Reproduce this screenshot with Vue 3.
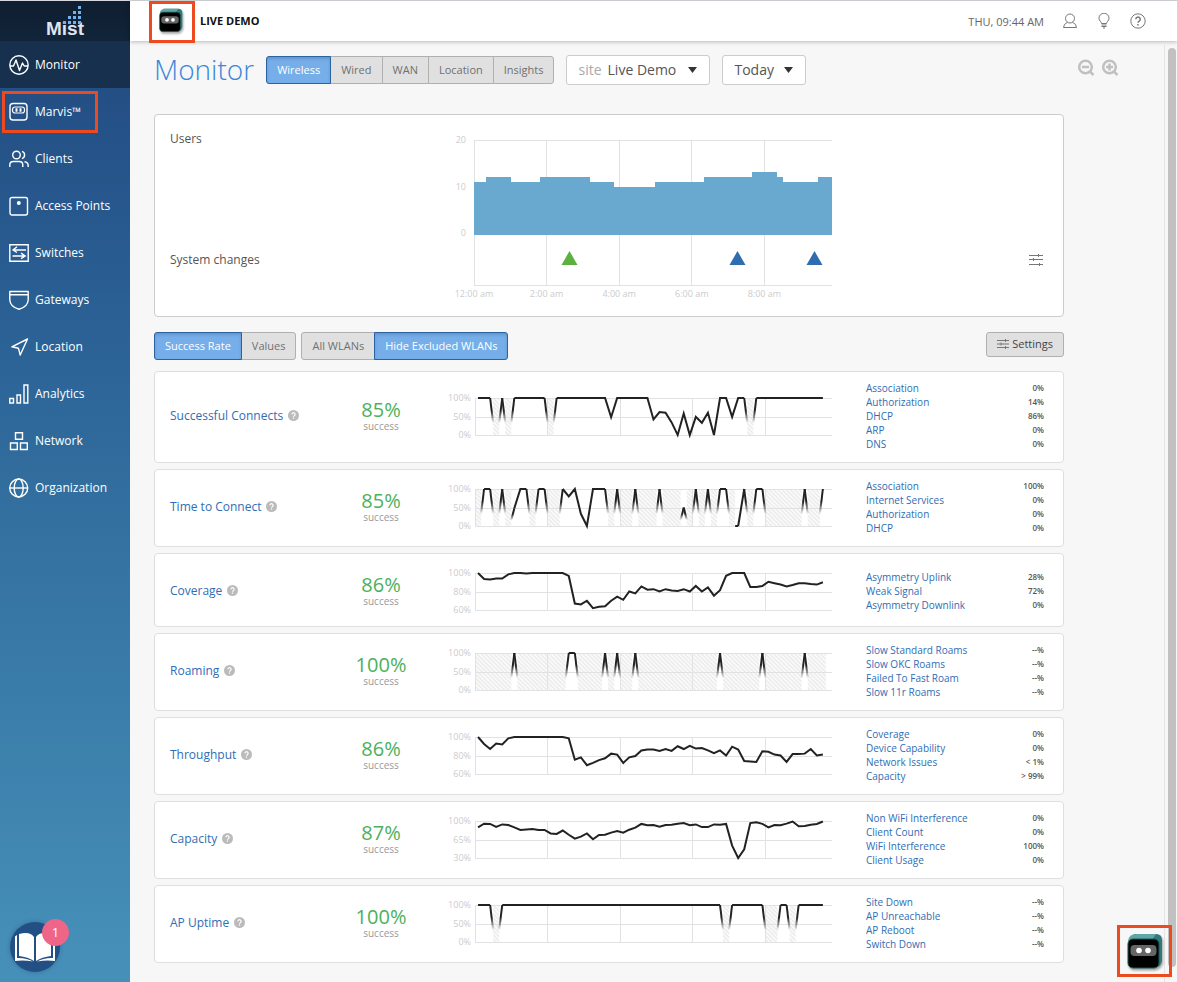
<script setup>
const nav = [
  { name: 'Monitor', icon: 'monitor', active: true },
  { name: 'Marvis™', icon: 'marvis' },
  { name: 'Clients', icon: 'clients' },
  { name: 'Access Points', icon: 'ap' },
  { name: 'Switches', icon: 'switches' },
  { name: 'Gateways', icon: 'gateways' },
  { name: 'Location', icon: 'location' },
  { name: 'Analytics', icon: 'analytics' },
  { name: 'Network', icon: 'network' },
  { name: 'Organization', icon: 'organization' },
]
const tabs = ['Wireless', 'Wired', 'WAN', 'Location', 'Insights']

// 58 samples, ten minutes apart; null marks an interval with no data
const COUNT = 58
const fill = (base, changes) => Array.from({ length: COUNT }, (_, i) => (i in changes ? changes[i] : base))

const connects = fill(100, {
  3: null, 5: null, 12: null, 22: 48, 29: 42, 30: 62, 31: 60, 32: 34, 33: 0, 34: 58, 35: 0,
  36: 49, 37: 33, 38: 60, 39: 0, 42: 49, 45: null,
})
const timeTo = fill(null, {
  1: 100, 2: 100, 4: 100, 6: 48, 7: 100, 8: 100, 10: 100, 11: 100, 14: 100, 15: 80, 16: 100, 17: 33, 18: 0,
  19: 100, 20: 100, 21: 100, 23: 100, 26: 100, 30: 100, 34: 50, 36: 100, 38: 100, 40: 100, 41: 100,
  43: 0, 44: 100, 46: 100, 47: 100, 54: 100, 57: 100,
})
const coverage = [
  100, 93.5, 93, 94, 94, 98.5, 100, 100, 99.5, 100, 100, 100, 100, 100, 100, 96.8, 67, 66, 70, 62, 63.5, 64, 70, 74.5, 71,
  80, 78, 85.5, 82, 82.5, 80, 82.5, 81, 80.5, 82.5, 80, 86, 80, 84.5, 75.5, 81.5, 97, 100, 100, 100, 85, 85, 86,
  90.5, 89, 87.5, 85.5, 87, 89, 89, 88, 87.5, 90,
]
const roaming = fill(null, { 6: 100, 15: 100, 16: 100, 21: 100, 23: 100, 26: 100, 40: 100, 47: 100, 54: 100 })
const throughput = [
  100, 92.5, 87, 93, 92, 98.5, 100, 100, 100, 100, 100, 100, 100, 100, 100, 98.5, 75.5, 78, 69.5, 72, 75, 77, 82, 81, 72,
  78, 79.5, 85.5, 86.5, 86.5, 85, 87, 85, 90, 87, 90.5, 87.5, 88, 85.5, 82.5, 85.5, 80, 89.5, 86.5, 74, 73.5, 73,
  84.5, 84, 81, 80, 73, 81.5, 81.5, 82, 87, 80, 81,
]
const capacity = [
  88, 95, 94.5, 89, 93.5, 92.5, 88, 83, 84, 85, 83, 83, 76.5, 75.5, 82, 74, 66.5, 70.5, 76.5, 65.5, 73.5, 74, 78, 81, 78,
  83.5, 87.5, 94.5, 92, 92.5, 89, 92.5, 93, 95, 96, 92, 93.5, 88.5, 88.5, 93.5, 93, 94.5, 53.5, 30, 46.5, 96, 97.5,
  94.5, 88, 92.5, 92, 95, 99, 90, 90.5, 93, 94.5, 99,
]
const uptime = fill(100, { 3: null, 41: null, 48: null, 49: null, 52: null })

const LEFT = 34
const STEP = 6.05
const TOP = 8
const HEIGHT = 37

function plot(values, min) {
  const x = (i) => LEFT + STEP / 2 + i * STEP
  const y = (v) => TOP + ((100 - v) / (100 - min)) * HEIGHT
  let line = ''
  const fades = []
  const gaps = []
  values.forEach((v, i) => {
    if (v === null) {
      const last = gaps[gaps.length - 1]
      if (last && last.end === i) {
        last.end = i + 1
      } else {
        gaps.push({ start: i, end: i + 1 })
      }
      return
    }
    const open = i === 0 || values[i - 1] === null
    line += `${open ? 'M' : 'L'}${x(i)} ${y(v)}`
    for (const side of [-1, 1]) {
      if (values[i + side] !== null) continue
      const tail = `M${x(i)} ${y(v)}L${x(i) + (side * STEP) / 2} ${y(v * 0.32)}`
      fades.push({ d: tail, flat: v === 0 })
    }
  })
  return { line, fades, gaps: gaps.map((g) => ({ x: LEFT + g.start * STEP, w: (g.end - g.start) * STEP })) }
}

const metric = (name, score, values, min, mid, causes) => ({ name, score, min, mid, causes, ...plot(values, min) })
const metrics = [
  metric('Successful Connects', '85%', connects, 0, 50, [['Association', '0%'], ['Authorization', '14%'], ['DHCP', '86%'], ['ARP', '0%'], ['DNS', '0%']]),
  metric('Time to Connect', '85%', timeTo, 0, 50, [['Association', '100%'], ['Internet Services', '0%'], ['Authorization', '0%'], ['DHCP', '0%']]),
  metric('Coverage', '86%', coverage, 60, 80, [['Asymmetry Uplink', '28%'], ['Weak Signal', '72%'], ['Asymmetry Downlink', '0%']]),
  metric('Roaming', '100%', roaming, 0, 50, [['Slow Standard Roams', '--%'], ['Slow OKC Roams', '--%'], ['Failed To Fast Roam', '--%'], ['Slow 11r Roams', '--%']]),
  metric('Throughput', '86%', throughput, 60, 80, [['Coverage', '0%'], ['Device Capability', '0%'], ['Network Issues', '< 1%'], ['Capacity', '> 99%']]),
  metric('Capacity', '87%', capacity, 30, 65, [['Non WiFi Interference', '0%'], ['Client Count', '0%'], ['WiFi Interference', '100%'], ['Client Usage', '0%']]),
  metric('AP Uptime', '100%', uptime, 0, 50, [['Site Down', '--%'], ['AP Unreachable', '--%'], ['AP Reboot', '--%'], ['Switch Down', '--%']]),
]

const gridX = [72.6, 145.3, 217.9, 290.6].map((v) => LEFT + v)
const hours = ['12:00 am', '2:00 am', '4:00 am', '6:00 am', '8:00 am']
// [start x, user count] of each level of the users chart
const levels = [[0, 11], [12, 12], [37, 11], [66, 12], [116, 11], [140, 10], [181, 11], [230, 12], [278, 13], [303, 12], [309, 11], [344, 12]]
const usersArea = levels.reduce((d, [x, n], i) => {
  const end = i + 1 < levels.length ? levels[i + 1][0] : 358
  const y = 112 - n * 4.85
  return `${d}L${33 + x} ${y}H${33 + end}`
}, 'M33 112') + 'V112Z'
</script>

<template>
  <div class="app">
    <nav class="sidebar">
      <a class="brand" href="#" aria-label="Mist home">
        <svg class="brand-dots" width="19" height="19" viewBox="0 0 19 19" fill="#74b0ea">
          <path d="M15 0h3v3h-3zM10 5h3v3h-3zM15 5h3v3h-3zM5 10h3v3H5zM10 10h3v3h-3zM15 10h3v3h-3zM0 15h3v3H0zM5 15h3v3H5zM10 15h3v3h-3zM15 15h3v3h-3z" />
        </svg>
        <span>Mist</span>
      </a>
      <a v-for="n in nav" :key="n.name" href="#" class="nav-item" :class="{ active: n.active }">
        <svg width="20" height="20" viewBox="0 0 20 20" fill="none" stroke="#fff" stroke-width="1.4">
          <template v-if="n.icon === 'monitor'">
            <circle cx="10" cy="10" r="9.2" /><path d="M1 11h3.500l2.500-6 3.500 10.500L13.500 8l1.700 3H19" stroke-linejoin="round" />
          </template>
          <template v-else-if="n.icon === 'marvis'">
            <rect x="1" y="1.500" width="17" height="16.500" rx="3" /><rect x="3.500" y="5" width="12" height="6" rx="2.500" stroke-width="1.200" />
            <path d="M7.500 6.200v3.600M11.500 6.200v3.600" stroke-width="2" />
          </template>
          <template v-else-if="n.icon === 'clients'">
            <circle cx="7.500" cy="6" r="3.800" /><path d="M.8 18v-2q0-3.500 3.500-3.500h6q3.500 0 3.500 3.500v2M13 2.400a3.800 3.800 0 0 1 0 7.200M15.500 12.700q3.700.5 3.700 4V18" />
          </template>
          <template v-else-if="n.icon === 'ap'">
            <rect x="1" y="1.500" width="17.500" height="17.500" rx="2" /><circle cx="9.800" cy="7" r="1.300" fill="#fff" />
          </template>
          <template v-else-if="n.icon === 'switches'">
            <path d="M.8 1.800h18.400v16.400H.8zM17 7H4.500M8 3.800 4 7l4 2.500M3.500 13H16M12 10.200l4.200 2.800-4.200 2.700" />
          </template>
          <template v-else-if="n.icon === 'gateways'">
            <path d="M.8 1.500h18.400V10q-.5 7-9.200 9.200Q1.300 17 .8 10zM.8 4.800h18.400" stroke-linejoin="round" />
          </template>
          <template v-else-if="n.icon === 'location'">
            <path d="M18.500 2 2.800 9.800l6.700 1.500L11.200 18z" stroke-linejoin="round" />
          </template>
          <template v-else-if="n.icon === 'analytics'">
            <path d="M.8 14.500h3.700v4.500H.8zM8 11h3.500v8H8zM15 1h3.800v18H15z" />
          </template>
          <template v-else-if="n.icon === 'network'">
            <path d="M6.500 1.800h7v6.400h-7zM1.500 12h6.800v6.500H1.500zM11.500 12h6.800v6.500h-6.800z" />
          </template>
          <template v-else>
            <circle cx="9.700" cy="10" r="9" /><ellipse cx="9.700" cy="10" rx="4.500" ry="9" /><path d="M.7 10h18" />
          </template>
        </svg>
        <span>{{ n.name }}</span>
      </a>
      <span class="marker"></span>
    </nav>

    <button class="help-book" type="button" aria-label="Guides">
      <svg width="42" height="34" viewBox="0 0 42 34" fill="#fff">
        <path d="M20 7v24Q14 27 5 26V4q11-3 15 3zM22 7v24q6-4 15-5V4q-11-3-15 3z" />
        <path d="M3 5v23q9-.5 16 3.500Q10 30 1 31V6.500zM39 5v23q-9-.5-16 3.500 9-1.500 18-.5V6.500z" />
      </svg>
      <span class="count">1</span>
    </button>

    <div class="page">
      <header class="topbar">
        <span class="bot-slot">
          <svg class="bot" width="24" height="25" viewBox="0 0 36 37">
            <path d="M7 1h22q6 0 6 6v20q0 4-4 7H7z" fill="#317a7c" /><path d="M1 8q1-7 8-7h20l-4 6z" fill="#5fa6a6" />
            <rect x="1" y="6" width="31" height="29" rx="5" fill="#000" stroke="#1c5557" />
            <rect x="3.500" y="12" width="26" height="11" rx="4" fill="#666" /><circle cx="12" cy="17.500" r="2.800" fill="#fff" /><circle cx="21" cy="17.500" r="2.800" fill="#fff" />
          </svg>
        </span>
        <strong>LIVE DEMO</strong>
        <span class="clock">THU, 09:44 AM</span>
        <button type="button" class="icon-btn" aria-label="Account">
          <svg width="16" height="16" viewBox="0 0 16 16" fill="none" stroke="#777"><circle cx="8" cy="5.500" r="4.500" /><path d="M5.500 9.300Q1.500 11 1.500 14.500h13q0-3.500-4-5.200" /></svg>
        </button>
        <button type="button" class="icon-btn" aria-label="Tips">
          <svg width="16" height="16" viewBox="0 0 16 16" fill="none" stroke="#777"><path d="M5.500 10.500C5.500 8.500 3 8 3 5.200a5 5 0 0 1 10 0C13 8 10.500 8.500 10.500 10.500zM5.500 12h5M5.500 13.500h5M7 15h2" /></svg>
        </button>
        <button type="button" class="icon-btn" aria-label="Help">
          <svg width="16" height="16" viewBox="0 0 16 16" fill="none" stroke="#777"><circle cx="8" cy="8" r="7.200" /><path d="M5.800 6.200a2.200 2.200 0 1 1 3.300 2q-1.100.6-1.100 1.600M8 11v1.600" stroke-width="1.500" /></svg>
        </button>
      </header>

      <main class="content">
        <div class="title-row">
          <h1>Monitor</h1>
          <div class="group">
            <button v-for="(t, i) in tabs" :key="t" type="button" :class="{ on: i === 0 }">{{ t }}</button>
          </div>
          <div class="picker site">
            <label for="site">site</label>
            <select id="site"><option>Live Demo</option></select>
            <svg width="9" height="6" viewBox="0 0 9 6"><path d="M0 0h9L4.500 6z" fill="#333" /></svg>
          </div>
          <div class="picker range">
            <select aria-label="Time range"><option>Today</option></select>
            <svg width="9" height="6" viewBox="0 0 9 6"><path d="M0 0h9L4.500 6z" fill="#333" /></svg>
          </div>
          <div class="zoom">
            <button type="button" class="icon-btn" aria-label="Zoom out">
              <svg width="18" height="18" viewBox="0 0 18 18" fill="none" stroke="#c0c0c0" stroke-width="2.500"><circle cx="8.500" cy="8" r="6.300" /><path d="M12.800 12.300 16.500 16M5 8h7" /></svg>
            </button>
            <button type="button" class="icon-btn" aria-label="Zoom in">
              <svg width="18" height="18" viewBox="0 0 18 18" fill="none" stroke="#c0c0c0" stroke-width="2.500"><circle cx="8.500" cy="8" r="6.300" /><path d="M12.800 12.300 16.500 16M5 8h7M8.500 4.500v7" /></svg>
            </button>
          </div>
        </div>

        <section class="card users">
          <div class="users-labels"><span>Users</span><span>System changes</span></div>
          <svg class="users-chart" width="392" height="182" viewBox="0 0 392 182">
            <g stroke="#e2e2e2" shape-rendering="crispEdges">
              <path d="M33 17.500h358M33 162.500h358M33.500 17v146" />
              <path v-for="g in gridX" :key="g" :d="`M${g - 1} 17v146`" />
            </g>
            <path :d="usersArea" fill="#69a8cf" shape-rendering="crispEdges" />
            <g fill="#ccc" text-anchor="end" font-size="9"><text x="25" y="20">20</text><text x="25" y="67">10</text><text x="25" y="113">0</text></g>
            <g fill="#ccc" text-anchor="middle" font-size="9"><text v-for="(h, i) in hours" :key="h" :x="33 + i * 72.6" y="174">{{ h }}</text></g>
            <path d="M128.500 128l8 14h-16z" fill="#5bb03f" />
            <path d="M296.500 128l8 14h-16zM373.500 128l8 14h-16z" fill="#2f6dae" />
          </svg>
          <button type="button" class="icon-btn tune" aria-label="Chart options">
            <svg width="16" height="14" viewBox="0 0 16 14" stroke="#777" fill="none"><path d="M1 2.500h14M1 6.500h14M1 11.500h14M10.500 1v3M5.500 5v3M11.500 10v3" /></svg>
          </button>
        </section>

        <div class="filters">
          <div class="group"><button type="button" class="on">Success Rate</button><button type="button">Values</button></div>
          <div class="group"><button type="button">All WLANs</button><button type="button" class="on">Hide Excluded WLANs</button></div>
          <button type="button" class="settings">
            <svg width="12" height="10" viewBox="0 0 12 10" stroke="#777" fill="none"><path d="M0 1.500h12M0 5h12M0 8.500h12M8.500 0v3M4 3.500v3M8.500 7v3" /></svg>
            Settings
          </button>
        </div>

        <section v-for="(m, k) in metrics" :key="m.name" class="card metric" :class="{ compact: m.causes.length < 4 }">
          <h2><a href="#">{{ m.name }}</a>
            <svg width="11" height="11" viewBox="0 0 11 11"><circle cx="5.500" cy="5.500" r="5.500" fill="#bbb" /><path d="M3.900 4.300a1.600 1.600 0 1 1 2.400 1.400q-.8.400-.8 1.100M5.500 7.600v1.100" stroke="#fff" stroke-width="1.200" fill="none" /></svg>
          </h2>
          <div class="score"><strong>{{ m.score }}</strong><span>success</span></div>
          <svg width="392" height="52" viewBox="0 0 392 52">
            <defs>
              <pattern :id="`hatch${k}`" width="3" height="3" patternUnits="userSpaceOnUse" patternTransform="rotate(-45)"><path d="M1 0v3" stroke="#dcdcdc" /></pattern>
              <linearGradient :id="`fade${k}`" x1="0" y1="0" x2="0" y2="1"><stop offset=".5" stop-color="#222" /><stop offset="1" stop-color="#222" stop-opacity="0" /></linearGradient>
            </defs>
            <rect v-for="g in m.gaps" :key="g.x" :x="g.x" y="8" :width="g.w" height="37" :fill="`url(#hatch${k})`" />
            <g stroke="#e2e2e2" shape-rendering="crispEdges">
              <path d="M34 8.500h357M34 27.500h357M34 45.500h357M34.500 8v38" />
              <path v-for="g in gridX" :key="g" :d="`M${g} 8v38`" />
            </g>
            <g fill="none" stroke-width="2">
              <path v-for="f in m.fades" :key="f.d" :d="f.d" :stroke="f.flat ? '#222' : `url(#fade${k})`" />
              <path :d="m.line" stroke="#222" />
            </g>
            <g fill="#ccc" text-anchor="end" font-size="9"><text x="30" y="11">100%</text><text x="30" y="30">{{ m.mid }}%</text><text x="30" y="48">{{ m.min }}%</text></g>
          </svg>
          <table>
            <tbody>
              <tr v-for="c in m.causes" :key="c[0]"><th scope="row"><a href="#">{{ c[0] }}</a></th><td>{{ c[1] }}</td></tr>
            </tbody>
          </table>
        </section>
      </main>
      <span class="scrollbar"></span>
    </div>

    <button type="button" class="assistant" aria-label="Open assistant">
      <svg class="bot" width="36" height="37" viewBox="0 0 36 37">
        <path d="M7 1h22q6 0 6 6v20q0 4-4 7H7z" fill="#317a7c" /><path d="M1 8q1-7 8-7h20l-4 6z" fill="#5fa6a6" />
        <rect x="1" y="6" width="31" height="29" rx="5" fill="#000" stroke="#1c5557" />
        <rect x="3.500" y="12" width="26" height="11" rx="4" fill="#666" /><circle cx="12" cy="17.500" r="2.800" fill="#fff" /><circle cx="21" cy="17.500" r="2.800" fill="#fff" />
      </svg>
    </button>
  </div>
</template>

<style>
body { margin: 0; background: #f7f7f7; }
</style>

<style scoped>
.app {
  display: flex;
  min-height: 100vh;
  position: relative;
  box-sizing: border-box;
  border-top: 1px solid #d6d8de;
  font-family: "Open Sans", sans-serif;
  color: #555;
  background: #f7f7f7;
}
button, select { font-family: inherit; color: inherit; margin: 0; }
a { color: inherit; text-decoration: none; }
svg { display: block; flex: none; }
.sidebar {
  position: relative;
  flex: none;
  width: 130px;
  background: linear-gradient(#234e84 80px, #2a5f93 300px, #3370a0 520px, #458fb8 950px);
  color: #fff;
}
.brand {
  position: relative;
  display: block;
  height: 40px;
  background: linear-gradient(#0f1e30, #112439);
  color: #dfe5ee;
  font: bold 19px/40px "Liberation Sans", sans-serif;
}
.brand span { position: absolute; left: 46px; top: 8px; }
.brand-dots { position: absolute; left: 63px; top: 5px; z-index: 1; }
.nav-item {
  display: flex;
  align-items: center;
  gap: 6px;
  height: 47px;
  padding-left: 9px;
  font-size: 12px;
  font-weight: 500;
  white-space: nowrap;
}
.nav-item.active { background: #17304e; }
.marker {
  position: absolute;
  left: 2px;
  top: 90px;
  box-sizing: border-box;
  width: 96px;
  height: 42px;
  border: 3px solid #ed4a20;
}
.help-book {
  position: absolute;
  left: 10px;
  bottom: 10px;
  display: grid;
  place-items: center;
  width: 50px;
  height: 50px;
  padding: 0;
  border: 0;
  border-radius: 50%;
  background: #225085;
  box-shadow: 0 0 4px rgba(20, 50, 90, 0.3);
}
.count {
  position: absolute;
  left: 32px;
  top: -3px;
  width: 27px;
  border-radius: 50%;
  background: #ee6587;
  color: #fff;
  font-size: 13px;
  line-height: 27px;
  text-align: center;
}
.page { position: relative; flex: 1; min-width: 0; }
.topbar {
  position: relative;
  display: flex;
  align-items: center;
  height: 40px;
  padding-right: 31px;
  background: #fff;
  box-shadow: 0 1px 4px rgba(0, 0, 0, 0.25);
  color: #111;
  font-size: 11px;
}
.topbar strong { padding-bottom: 2px; }
.bot { filter: drop-shadow(1px 2px 1px rgba(0, 0, 0, 0.35)); }
.bot-slot {
  display: grid;
  place-items: center;
  box-sizing: border-box;
  width: 46px;
  height: 42px;
  margin: 2px 5px 0 19px;
  padding: 0 3px 4px 0;
  border: 3px solid #ed4a20;
}
.clock { margin-left: auto; margin-right: 10px; color: #666; }
.icon-btn { display: block; padding: 0; border: 0; background: none; }
.topbar .icon-btn { margin-left: 8px; margin-right: 10px; }
.topbar .icon-btn:last-child { margin-right: 0; }
.content { padding: 14px 59px 19px 24px; }
.title-row { display: flex; align-items: center; height: 30px; margin-bottom: 29px; }
h1 { margin: 0 12px 0 0; padding-bottom: 2px; font-size: 28px; line-height: 30px; font-weight: 300; color: #3b86dd; }
.group { display: flex; }
.group button {
  height: 28px;
  margin-left: -1px;
  padding: 0 10px 2px;
  border: 1px solid #b0b0b0;
  background: #e0e0e0;
  color: #707070;
  font-size: 11px;
}
.group button:first-child { margin-left: 0; border-radius: 3px 0 0 3px; }
.group button:last-child { border-radius: 0 3px 3px 0; }
.group .on {
  position: relative;
  border-color: #2a62a2;
  background: #76aee9;
  color: #fff;
  font-weight: 500;
  box-shadow: inset 0 2px 3px rgba(0, 0, 0, 0.15);
}
.picker {
  position: relative;
  display: flex;
  align-items: center;
  box-sizing: border-box;
  height: 30px;
  padding-left: 11px;
  border: 1px solid #ccc;
  border-radius: 3px;
  background: #fff;
  font-size: 14px;
}
.picker label { margin-right: 6px; padding-bottom: 2px; color: #aaa; }
.picker select { appearance: none; flex: 1; min-width: 0; height: 28px; padding: 0 0 2px; border: 0; background: none; font-size: 14px; }
.picker svg { position: absolute; right: 12px; pointer-events: none; }
.site { width: 144px; margin-left: 12px; }
.range { width: 84px; margin-left: 12px; }
.zoom { display: flex; gap: 6px; margin-left: auto; margin-right: -1px; margin-top: -4px; }
.card { box-sizing: border-box; max-width: 910px; border: 1px solid #dedede; border-radius: 4px; background: #fff; }
.users { position: relative; display: flex; justify-content: space-between; height: 203px; border-color: #ccc; padding: 8px 19px 10px 15px; font-size: 12px; }
.users-labels { width: 271px; display: flex; flex-direction: column; gap: 105px; padding-top: 8px; line-height: 16px; }
.users-chart { margin-right: auto; }
.tune { align-self: flex-start; margin-top: 130px; }
.filters { display: flex; align-items: flex-start; gap: 5px; max-width: 910px; margin: 15px 0 11px; }
.settings {
  display: flex;
  align-items: center;
  gap: 3px;
  height: 25px;
  margin-left: auto;
  padding: 0 10px 2px;
  border: 1px solid #b0b0b0;
  border-radius: 3px;
  background: #e0e0e0;
  color: #444;
  font-size: 11px;
}
.metric {
  display: grid;
  grid-template-columns: minmax(151px, 1fr) 80px 392px 191px;
  column-gap: 20px;
  align-items: center;
  min-height: 74px;
  margin-bottom: 6px;
  padding: 9px 19px 11px 15px;
}
.metric.compact { padding-top: 11px; padding-bottom: 9px; }
.metric:last-child { margin-bottom: 0; }
.metric h2 { display: flex; align-items: center; gap: 5px; margin: 0; padding-bottom: 2px; font-size: 12px; font-weight: 400; color: #2f6db5; white-space: nowrap; }
.score { text-align: center; }
.score strong { display: block; font-size: 20px; line-height: 20px; font-weight: 400; color: #4cb15a; }
.score span { display: block; font-size: 10px; line-height: 12px; color: #999; }
table { justify-self: end; width: 178px; border-collapse: collapse; }
th, td { height: 14px; padding: 0; line-height: 14px; }
th { text-align: left; font-size: 10px; font-weight: 400; color: #2f6db5; }
td { text-align: right; font-size: 8px; font-weight: 600; color: #555; }
.scrollbar { position: absolute; right: 1px; top: 47px; bottom: 15px; width: 8px; border-radius: 4px; background: #c1c1c1; }
.page::after { content: ""; position: absolute; right: 12px; top: 44px; bottom: 0; width: 1px; background: #e4e4e4; }
.assistant {
  position: absolute;
  right: 5px;
  bottom: 5px;
  display: grid;
  place-items: center;
  width: 55px;
  height: 52px;
  padding: 0;
  border: 3px solid #ed4a20;
  background: none;
}
</style>
